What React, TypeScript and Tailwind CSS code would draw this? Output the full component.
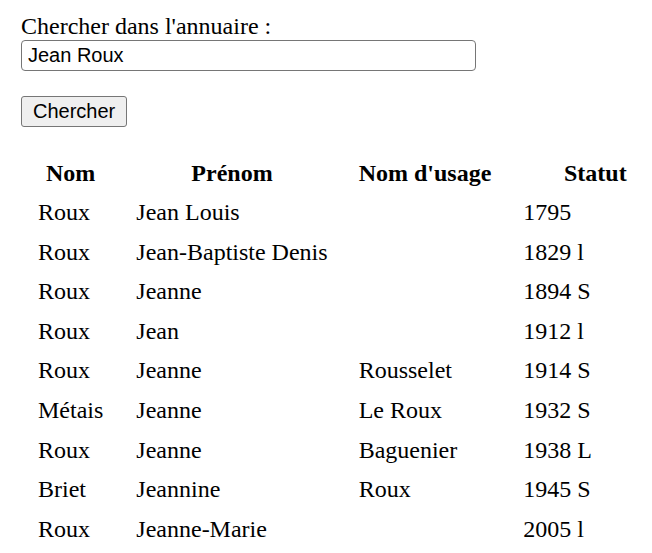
import { useState } from "react";

interface Person {
  nom: string;
  prenom: string;
  usage: string;
  statut: string;
}

const people: Person[] = [
  { nom: "Roux", prenom: "Jean Louis", usage: "", statut: "1795" },
  { nom: "Roux", prenom: "Jean-Baptiste Denis", usage: "", statut: "1829 l" },
  { nom: "Roux", prenom: "Jeanne", usage: "", statut: "1894 S" },
  { nom: "Roux", prenom: "Jean", usage: "", statut: "1912 l" },
  { nom: "Roux", prenom: "Jeanne", usage: "Rousselet", statut: "1914 S" },
  { nom: "Métais", prenom: "Jeanne", usage: "Le Roux", statut: "1932 S" },
  { nom: "Roux", prenom: "Jeanne", usage: "Baguenier", statut: "1938 L" },
  { nom: "Briet", prenom: "Jeannine", usage: "Roux", statut: "1945 S" },
  { nom: "Roux", prenom: "Jeanne-Marie", usage: "", statut: "2005 l" },
];

export default function App() {
  const [query, setQuery] = useState("Jean Roux");

  return (
    <div className="min-h-screen overflow-x-hidden bg-white px-[21px] pt-[12px] font-['Liberation_Serif',serif] text-[24px] leading-[28px] text-black">
      <label htmlFor="q" className="block">Chercher dans l'annuaire :</label>
      <input
        id="q"
        value={query}
        onChange={(e) => setQuery(e.target.value)}
        className="block h-[31px] w-[455px] rounded-[4px] border border-[#767676] bg-white px-[6px] font-['Liberation_Sans',sans-serif] text-[20px] leading-[23px] text-black outline-none"
      />
      <button className="mt-[25px] block h-[31px] rounded-[3px] border border-[#767676] bg-[#efefef] px-[11px] font-['Liberation_Sans',sans-serif] text-[20px] leading-[23px] text-black">
        Chercher
      </button>

      <table className="mt-[25px] -ml-[1px] w-max border-separate border-spacing-[3px] whitespace-nowrap">
        <thead>
          <tr>
            <th className="px-[15px] py-[4.5px] text-center font-bold leading-[27.6px]">Nom</th>
            <th className="pl-[15px] pr-[13px] py-[4.5px] text-center font-bold leading-[27.6px]">Prénom</th>
            <th className="pl-[15px] pr-[14px] py-[4.5px] text-center font-bold leading-[27.6px]">Nom d'usage</th>
            <th className="w-[174px] px-[15px] py-[4.5px] text-center font-bold leading-[27.6px]">Statut</th>
          </tr>
        </thead>
        <tbody>
          {people.map((p, i) => (
            <tr key={i}>
              <td className="px-[15px] py-[4.5px] leading-[27.6px]">{p.nom}</td>
              <td className="pl-[15px] pr-[13px] py-[4.5px] leading-[27.6px]">{p.prenom}</td>
              <td className="pl-[15px] pr-[14px] py-[4.5px] leading-[27.6px]">{p.usage}</td>
              <td className="px-[15px] py-[4.5px] leading-[27.6px]">{p.statut}</td>
            </tr>
          ))}
        </tbody>
      </table>
    </div>
  );
}
